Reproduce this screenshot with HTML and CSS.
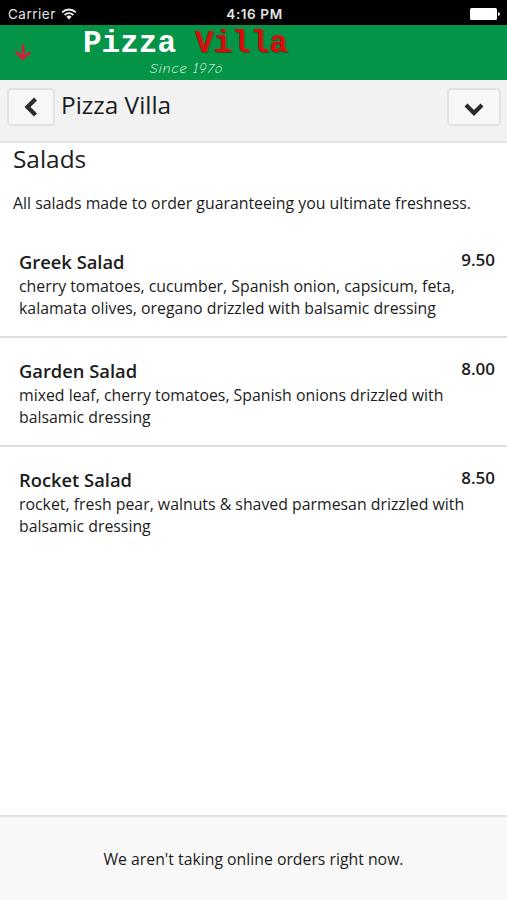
FILE: index.html
```html
<!DOCTYPE html>
<html lang="en">
<head>
  <meta charset="UTF-8">
  <meta name="viewport" content="width=device-width, initial-scale=1.0">
  <title>Pizza Villa</title>
  <link rel="stylesheet" href="styles.css">
</head>
<body>
  <div class="status-bar">
    <div class="carrier">
      <span>Carrier</span>
      <svg class="wifi" viewBox="0 0 16 12" width="16" height="12">
        <path d="M1.2 4.3a9.6 9.6 0 0 1 13.6 0M3.6 7a6.2 6.2 0 0 1 8.8 0" fill="none" stroke="#eee" stroke-width="1.8"/>
        <path d="M5.3 8.8a3.9 3.9 0 0 1 5.4 0L8 11.6z" fill="#eee"/>
      </svg>
    </div>
    <span class="time">4:16 PM</span>
    <div class="battery">
      <svg viewBox="0 0 31 12" width="31" height="12">
        <rect width="27" height="12" rx="1.5" fill="#fff"/>
        <path d="M28 4q2 .5 2 2t-2 2z" fill="#fff"/>
      </svg>
    </div>
  </div>

  <header class="brand-bar">
    <svg class="arrow-down" viewBox="0 0 18 18" width="18" height="18">
      <path d="M9 1v14M1.8 8l7.2 6.5L16.200 8" fill="none" stroke="#d0213a" stroke-width="3"/>
    </svg>
    <div class="logo">
      <div class="logo-name">Pizza <span>Villa</span></div>
      <div class="logo-since">Since 1976</div>
    </div>
  </header>

  <nav class="nav-bar">
    <button class="btn btn-back" aria-label="Back">
      <svg viewBox="0 0 16 20" width="16" height="20">
        <path d="M12.500 2L4.500 10l8 8" fill="none" stroke="#2b2b2b" stroke-width="4.2"/>
      </svg>
    </button>
    <h1>Pizza Villa</h1>
    <button class="btn btn-menu" aria-label="Menu">
      <svg viewBox="0 0 20 16" width="20" height="16">
        <path d="M2 4l8 8 8-8" fill="none" stroke="#2b2b2b" stroke-width="4.2"/>
      </svg>
    </button>
  </nav>

  <main>
    <h2>Salads</h2>
    <p class="intro">All salads made to order guaranteeing you ultimate freshness.</p>
    <ul class="menu-list">
      <li class="menu-item">
        <div class="item-head">
          <h3>Greek Salad</h3>
          <span class="price">9.50</span>
        </div>
        <p>cherry tomatoes, cucumber, Spanish onion, capsicum, feta, kalamata olives, oregano drizzled with balsamic dressing</p>
      </li>
      <li class="menu-item">
        <div class="item-head">
          <h3>Garden Salad</h3>
          <span class="price">8.00</span>
        </div>
        <p>mixed leaf, cherry tomatoes, Spanish onions drizzled with balsamic dressing</p>
      </li>
      <li class="menu-item">
        <div class="item-head">
          <h3>Rocket Salad</h3>
          <span class="price">8.50</span>
        </div>
        <p>rocket, fresh pear, walnuts &amp; shaved parmesan drizzled with balsamic dressing</p>
      </li>
    </ul>
  </main>

  <footer class="notice">We aren't taking online orders right now.</footer>
</body>
</html>
```
FILE: styles.css
```css
* {
  box-sizing: border-box;
}
body {
  margin: 0;
  height: 900px;
  display: flex;
  flex-direction: column;
  overflow: hidden;
  background-color: #fff;
  color: #1c1c1c;
  font-family: "Open Sans", sans-serif;
  font-size: 15.85px;
}
h1, h2, h3, p, ul {
  margin: 0;
  padding: 0;
}
.status-bar {
  height: 25px;
  flex: none;
  display: grid;
  grid-template-columns: 1fr auto 1fr;
  align-items: center;
  padding: 3px 6px 0 8px;
  background-color: #000;
  color: #e4e4e4;
  font-family: Inter, sans-serif;
  font-size: 13.5px;
  line-height: 22px;
}
.carrier {
  display: flex;
  align-items: center;
  gap: 5px;
  letter-spacing: 0.5px;
}
.time {
  font-weight: 600;
  letter-spacing: 0.6px;
}
.battery {
  display: flex;
  justify-content: flex-end;
}
.brand-bar {
  height: 55px;
  flex: none;
  display: flex;
  background-color: #039447;
}
.arrow-down {
  margin: 19px 0 0 14px;
}
.logo {
  width: 208px;
  margin-left: 51px;
  padding-top: 2px;
}
.logo-name {
  font-family: "Courier New", "Liberation Mono", monospace;
  font-size: 31px;
  font-weight: bold;
  line-height: 34px;
  color: #fff;
  white-space: nowrap;
}
.logo-name span {
  color: #d90b0b;
  text-shadow: 1px 1px 1px rgba(60, 40, 0, 0.6);
}
.logo-since {
  padding-left: 67px;
  font-family: "Comic Neue", "Lato", cursive;
  font-size: 14px;
  font-style: italic;
  font-weight: 300;
  letter-spacing: 0.9px;
  line-height: 16px;
  color: #fff;
}
.nav-bar {
  height: 63px;
  flex: none;
  display: flex;
  align-items: flex-start;
  padding: 8px 6px 0 7px;
  background-color: #f2f2f2;
  border-bottom: 2px solid #e2e2e2;
}
.nav-bar h1 {
  flex: 1;
  padding-left: 6px;
  font-size: 24.4px;
  font-weight: normal;
  line-height: 33px;
}
.btn {
  height: 38px;
  display: flex;
  align-items: center;
  justify-content: center;
  padding: 0;
  background-color: #f7f7f7;
  border: 2px solid #e3e3e3;
  border-radius: 4px;
}
.btn-back {
  width: 48px;
}
.btn-menu {
  width: 54px;
  padding-top: 3px;
}
main {
  flex: 1;
}
h2 {
  padding: 0 13px;
  font-size: 24.4px;
  font-weight: normal;
  line-height: 32px;
}
.intro {
  padding: 17px 13px 0;
  line-height: 22px;
}
.menu-list {
  margin-top: 15px;
  list-style: none;
}
.menu-item {
  height: 109px;
  padding: 20px 12px 0 19px;
  border-bottom: 2px solid #dedede;
}
.menu-item:last-child {
  border-bottom: none;
}
.item-head {
  display: flex;
  justify-content: space-between;
}
.item-head h3 {
  font-size: 18.35px;
  font-weight: 600;
  line-height: 26px;
}
.price {
  font-size: 17px;
  font-weight: 600;
  line-height: 22px;
}
.menu-item p {
  max-width: 460px;
  line-height: 22px;
}
.notice {
  height: 85px;
  flex: none;
  padding-top: 1px;
  background-color: #f8f8f8;
  border-top: 2px solid #e2e2e2;
  font-size: 15.8px;
  line-height: 82px;
  text-align: center;
}
```
